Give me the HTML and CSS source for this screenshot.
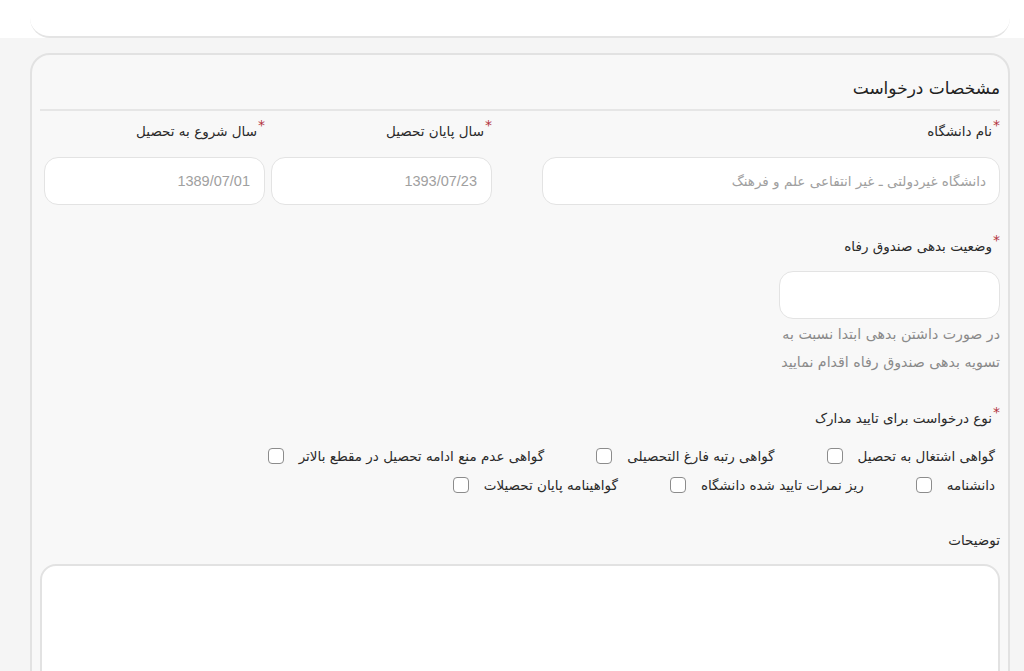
FILE: index.html
```html
<!DOCTYPE html>
<html lang="fa" dir="rtl">
<head>
    <meta charset="UTF-8">
    <title>مشخصات درخواست</title>
    <link rel="stylesheet" href="styles.css">
</head>
<body>
    <div class="top">
        <div class="prev-card"></div>
    </div>

    <div class="card">
        <h3 class="card-title">مشخصات درخواست</h3>

        <div class="row-edu">
            <div class="field">
                <label class="lbl req">نام دانشگاه</label>
                <div class="input">دانشگاه غیردولتی ـ غیر انتفاعی علم و فرهنگ</div>
            </div>
            <div class="field">
                <label class="lbl req">سال پایان تحصیل</label>
                <div class="input num">1393/07/23</div>
            </div>
            <div class="field">
                <label class="lbl req">سال شروع به تحصیل</label>
                <div class="input num">1389/07/01</div>
            </div>
        </div>

        <div class="field debt">
            <label class="lbl req">وضعیت بدهی صندوق رفاه</label>
            <div class="input"></div>
            <p class="help">در صورت داشتن بدهی ابتدا نسبت به<br>تسویه بدهی صندوق رفاه اقدام نمایید</p>
        </div>

        <div class="field types">
            <label class="lbl req">نوع درخواست برای تایید مدارک</label>
            <div class="checks">
                <label class="chk">گواهی اشتغال به تحصیل <span class="box"></span></label>
                <label class="chk">گواهی رتبه فارغ التحصیلی <span class="box"></span></label>
                <label class="chk">گواهی عدم منع ادامه تحصیل در مقطع بالاتر <span class="box"></span></label>
            </div>
            <div class="checks">
                <label class="chk">دانشنامه <span class="box"></span></label>
                <label class="chk">ریز نمرات تایید شده دانشگاه <span class="box"></span></label>
                <label class="chk">گواهینامه پایان تحصیلات <span class="box"></span></label>
            </div>
        </div>

        <div class="field notes">
            <label class="lbl">توضیحات</label>
            <div class="textarea"></div>
        </div>
    </div>
</body>
</html>
```

FILE: styles.css
```css
* {
    margin: 0;
    padding: 0;
    box-sizing: border-box;
}
body {
    background: #f5f5f5;
    font-family: "Liberation Sans", "DejaVu Sans", sans-serif;
    color: #333;
    height: 671px;
    overflow: hidden;
}
.top {
    background: #fff;
    height: 38px;
}
.prev-card {
    height: 38px;
    margin: 0 14px 0 30px;
    background: #fff;
    border-bottom: 2px solid #e4e4e4;
    border-bottom-left-radius: 20px;
    border-bottom-right-radius: 20px;
}
.card {
    margin: 15px 14px 0 30px;
    background: #f8f8f8;
    border: 2px solid #e2e2e2;
    border-radius: 20px;
    padding: 22px 8px 0 8px;
    height: 700px;
}
.card-title {
    font-family: "DejaVu Sans", sans-serif;
    font-size: 17px;
    font-weight: normal;
    line-height: 22px;
    color: #222;
    padding-bottom: 10px;
    border-bottom: 2px solid #e6e6e6;
}
.lbl {
    display: block;
    font-family: "DejaVu Sans", sans-serif;
    font-size: 13.5px;
    line-height: 20px;
    color: #2a2a2a;
}
.lbl.req::before {
    content: '*';
    color: #b3333d;
    font-size: 14px;
    position: relative;
    top: -6px;
    margin-left: 1px;
}
.input {
    height: 48px;
    background: #fff;
    border: 1px solid #e3e3e3;
    border-radius: 14px;
    padding: 0 13px;
    font-family: "DejaVu Sans", sans-serif;
    font-size: 13.5px;
    line-height: 46px;
    color: #a0a0a0;
    white-space: nowrap;
    overflow: hidden;
}
.input.num {
    font-family: "Liberation Sans", sans-serif;
    font-size: 14.5px;
    padding: 0 14px;
}
.row-edu {
    display: grid;
    grid-template-columns: 502px 221px 221px;
    column-gap: 6px;
    margin: 10px 0 0 4px;
}
.row-edu .field:first-child {
    margin-left: 44px;
}
.row-edu .lbl {
    margin-bottom: 16px;
}
.debt {
    width: 221px;
    margin-top: 31px;
}
.debt .lbl {
    margin-bottom: 15px;
}
.help {
    font-family: "DejaVu Sans", sans-serif;
    font-size: 14.2px;
    line-height: 28px;
    color: #8a8a8a;
    white-space: nowrap;
    margin-top: 1px;
}
.types {
    margin-top: 32px;
}
.types .lbl {
    margin-bottom: 13px;
}
.checks {
    display: flex;
    padding-right: 5px;
    height: 29px;
    align-items: center;
}
.chk {
    display: flex;
    align-items: center;
    gap: 15px;
    margin-left: 52px;
    font-family: "DejaVu Sans", sans-serif;
    font-size: 13.5px;
    color: #2a2a2a;
    white-space: nowrap;
}
.box {
    width: 16px;
    height: 16px;
    background: #fff;
    border: 1.5px solid #8c8c8c;
    border-radius: 4px;
}
.notes {
    margin-top: 31px;
}
.notes .lbl {
    margin-bottom: 14px;
}
.textarea {
    height: 200px;
    background: #fff;
    border: 2px solid #e2e2e2;
    border-radius: 16px;
}
```
